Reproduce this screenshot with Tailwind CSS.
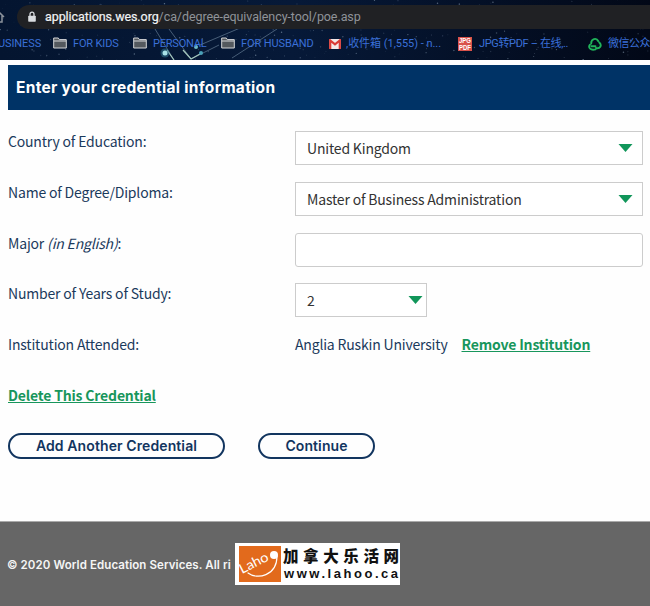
<!DOCTYPE html>
<html lang="en">
<head>
<meta charset="utf-8">
<title>Degree Equivalency Tool</title>
<script src="https://cdn.jsdelivr.net/npm/@tailwindcss/browser@4"></script>
</head>
<body class="w-[650px] h-[606px] overflow-hidden bg-[#fefefe] font-['Noto_Sans_CJK_SC',sans-serif] text-[14px] tracking-[-0.18px] leading-5 text-[#1b3a5c] flex flex-col">
<header class="relative h-[60px] shrink-0 overflow-hidden bg-[#020c20] font-[Roboto,'Noto_Sans_CJK_SC',sans-serif] tracking-normal">
  <svg id="sky" class="absolute inset-0" width="650" height="60" viewBox="0 0 650 60">
    <defs><linearGradient id="g"><stop offset="0" stop-color="#041530"/><stop offset=".45" stop-color="#061938"/><stop offset="1" stop-color="#020817"/></linearGradient></defs>
    <rect width="650" height="60" fill="url(#g)"/>
    <path d="M155 29l19 31M169 29l22 30 28-14M232 58l45-29M200 45l40-17" stroke="#7e98ad" stroke-opacity=".55" fill="none"/>
    <path d="M167 50l7 10M183 50l8 9 9-5" stroke="#a5c8bd" stroke-width="1.2" fill="none"/>
    <circle cx="165" cy="53" r="4.5" fill="#347e96" opacity=".5"/><circle cx="165" cy="53" r="2.5" fill="#a9e2e8"/>
    <circle cx="196" cy="47" r="2" fill="#69b8c8"/><circle cx="201" cy="53" r="2" fill="#4aa1b8"/>
  </svg>
  <div class="relative flex flex-col pt-[5px]">
    <div class="flex items-center h-6">
      <svg class="shrink-0" width="17" height="16" viewBox="0 0 17 16" fill="none" stroke="#8c929b" stroke-width="1.5"><path d="M-8 8L-2 2 4 8M2 6v7h-4"/></svg>
      <div class="flex items-center flex-1 h-6 rounded-l-full bg-[#202124] pl-[10px]">
        <svg width="10" height="12" viewBox="0 0 10 12"><path d="M3 5V3.2a2 2 0 0 1 4 0V5" fill="none" stroke="#d9dce0" stroke-width="1.3"/><rect x="1.2" y="4.7" width="7.6" height="6" rx=".8" fill="#d9dce0"/></svg>
        <span class="ml-[8px] text-[12.5px] text-[#8f9399] whitespace-nowrap tracking-[-0.08px]"><span class="text-[#f1f3f4] [-webkit-text-stroke:0.2px_#f1f3f4]">applications.wes.org</span>/ca/degree-equivalency-tool/poe.asp</span>
      </div>
    </div>
    <nav class="relative h-[30px] text-[11px] leading-[30px] text-[#3a70d8] whitespace-nowrap">
      <span class="absolute left-0 -indent-[2px] tracking-[-0.1px]">USINESS</span>
      <svg class="absolute left-[53px] top-[8px]" width="14" height="12" viewBox="0 0 14 12"><path d="M.7 11V1h4.6l1 1.6h7V11z" fill="#54595e" stroke="#d4d6d8"/><path d="M1 4h12" stroke="#d4d6d8"/></svg>
      <span class="absolute left-[73px] tracking-[-0.15px]">FOR KIDS</span>
      <svg class="absolute left-[133px] top-[8px]" width="14" height="12" viewBox="0 0 14 12"><path d="M.7 11V1h4.6l1 1.6h7V11z" fill="#54595e" stroke="#d4d6d8"/><path d="M1 4h12" stroke="#d4d6d8"/></svg>
      <span class="absolute left-[153px] tracking-[-0.2px]">PERSONAL</span>
      <svg class="absolute left-[221px] top-[8px]" width="14" height="12" viewBox="0 0 14 12"><path d="M.7 11V1h4.6l1 1.6h7V11z" fill="#54595e" stroke="#d4d6d8"/><path d="M1 4h12" stroke="#d4d6d8"/></svg>
      <span class="absolute left-[241px] tracking-[-0.1px]">FOR HUSBAND</span>
      <svg class="absolute left-[329px] top-[10px]" width="12" height="10" viewBox="0 0 12 10"><rect width="12" height="10" rx="1" fill="#f2e9e8"/><path d="M1.2 10V1.5L6 5.4l4.8-3.9V10" fill="none" stroke="#d93a35" stroke-width="2.2"/></svg>
      <span class="absolute left-[346px] tracking-[-0.03px]">,收件箱 (1,555) - n...</span>
      <svg class="absolute left-[458px] top-[8px]" width="14" height="14" viewBox="0 0 14 14"><rect width="14" height="14" fill="#d9524a"/><g fill="#fff" font-family="Liberation Sans" font-weight="700" font-size="6.4"><text x="1" y="6" textLength="12" lengthAdjust="spacingAndGlyphs">JPG</text><text x="1" y="12.7" textLength="12" lengthAdjust="spacingAndGlyphs">PDF</text></g></svg>
      <span class="absolute left-[479px] tracking-[-0.35px]">JPG转PDF – 在线,..</span>
      <svg class="absolute left-[588px] top-[8px]" width="14" height="14" viewBox="0 0 14 14" fill="none" stroke="#20b45a" stroke-width="1.9" stroke-linecap="round"><path d="M3.200 6.500C3 1.500 8.500.5 10.200 4M11.300 5.500c3 3 .7 6.500-3.300 5.500M7.500 12.300C2.500 13.800 0 10.500 1.800 7.800M3.500 9.300h4"/></svg>
      <span class="absolute left-[608px] tracking-[-0.5px]">微信公众</span>
    </nav>
  </div>
</header>

<main class="flex flex-col h-[461px] shrink-0 pl-2 pt-[5px]">
  <h1 class="flex items-center h-[45px] shrink-0 pl-2 bg-[#003366] text-white font-[Inter,sans-serif] font-bold text-[15.5px] tracking-[0.3px] whitespace-nowrap">Enter your credential information</h1>
  <form class="grid grid-cols-[287px_348px] auto-rows-[50.8px] mt-[21px] whitespace-nowrap">
    <label>Country of Education:</label>
    <div class="flex items-center justify-between h-[34px] border border-[#ccc] bg-white pl-[11px] pr-[9px] text-[#333]"><span>United Kingdom</span><svg width="15" height="8" viewBox="0 0 15 8"><path d="M.5 0h14l-7 8z" fill="#11965a"/></svg></div>
    <label>Name of Degree/Diploma:</label>
    <div class="flex items-center justify-between h-[34px] border border-[#ccc] bg-white pl-[11px] pr-[9px] text-[#333]"><span>Master of Business Administration</span><svg width="15" height="8" viewBox="0 0 15 8"><path d="M.5 0h14l-7 8z" fill="#11965a"/></svg></div>
    <label>Major <i>(in English)</i>:</label>
    <div class="h-[34px] border border-[#ccc] rounded-[3px] bg-white"></div>
    <label>Number of Years of Study:</label>
    <div class="flex items-center justify-between w-[132px] h-[34px] border border-[#ccc] bg-white pl-[11px] pr-[3px] text-[#333]"><span>2</span><svg width="15" height="8" viewBox="0 0 15 8"><path d="M.5 0h14l-7 8z" fill="#11965a"/></svg></div>
    <label>Institution Attended:</label>
    <div class="flex gap-[14px]"><span>Anglia Ruskin University</span><a class="font-bold text-[#18965c] underline">Remove Institution</a></div>
    <a class="font-bold text-[#18965c] underline">Delete This Credential</a>
  </form>
  <div class="flex gap-[33px] -mt-[3px] font-[Inter,sans-serif] font-semibold text-[14px] tracking-[0.1px] whitespace-nowrap text-[#12355f]">
    <button type="button" class="w-[217px] h-[26px] rounded-full border-2 border-[#12355f]">Add Another Credential</button>
    <button type="button" class="w-[117px] h-[26px] rounded-full border-2 border-[#12355f]">Continue</button>
  </div>
</main>

<footer class="relative flex items-center flex-1 pl-[7px] pt-[2px] border-t border-[#aaa] bg-[#666] text-[#f5f5f5] font-[Inter,sans-serif] font-semibold text-[11.5px] tracking-[0.09px]">
  <span>© 2020 World Education Services. All ri</span>
  <div class="absolute left-[235px] top-[21px] w-[165px] h-[42px] bg-white">
    <svg width="165" height="42" viewBox="0 0 165 42" letter-spacing="0">
      <rect x="4" y="3" width="42" height="36" fill="#e26a1c"/>
      <path d="M13 30c9 7 29 3 29-17" fill="none" stroke="#fff" stroke-width="1.200" stroke-linecap="round"/>
      <text transform="translate(7 31) rotate(-27)" font-family="Lato" font-weight="400" font-size="13.500" fill="#fff" textLength="31" lengthAdjust="spacingAndGlyphs">Laho</text>
      <circle cx="39" cy="12" r="4" fill="#fff"/>
      <text x="48" y="19" font-family="Noto Sans CJK SC" font-weight="900" font-size="15.500" fill="#111" textLength="116">加拿大乐活网</text>
      <text x="49" y="35" font-family="Liberation Sans" font-weight="700" font-size="13" fill="#111" textLength="114">www.lahoo.ca</text>
    </svg>
  </div>
</footer>
<script>
// Scatter a fixed pattern of stars over the browser theme.
let seed = 17;
const rnd = () => (seed = seed * 16807 % 2147483647) / 2147483647;
const sky = document.getElementById('sky');
for (let i = 0; i < 330; i++) {
  const c = document.createElementNS('http://www.w3.org/2000/svg', 'circle');
  c.setAttribute('cx', rnd() * 650);
  c.setAttribute('cy', rnd() * 60);
  c.setAttribute('r', 0.3 + rnd() * 0.5);
  c.setAttribute('fill', '#a9bed2');
  c.setAttribute('opacity', 0.1 + rnd() * 0.45);
  sky.appendChild(c);
}
</script>
</body>
</html>
